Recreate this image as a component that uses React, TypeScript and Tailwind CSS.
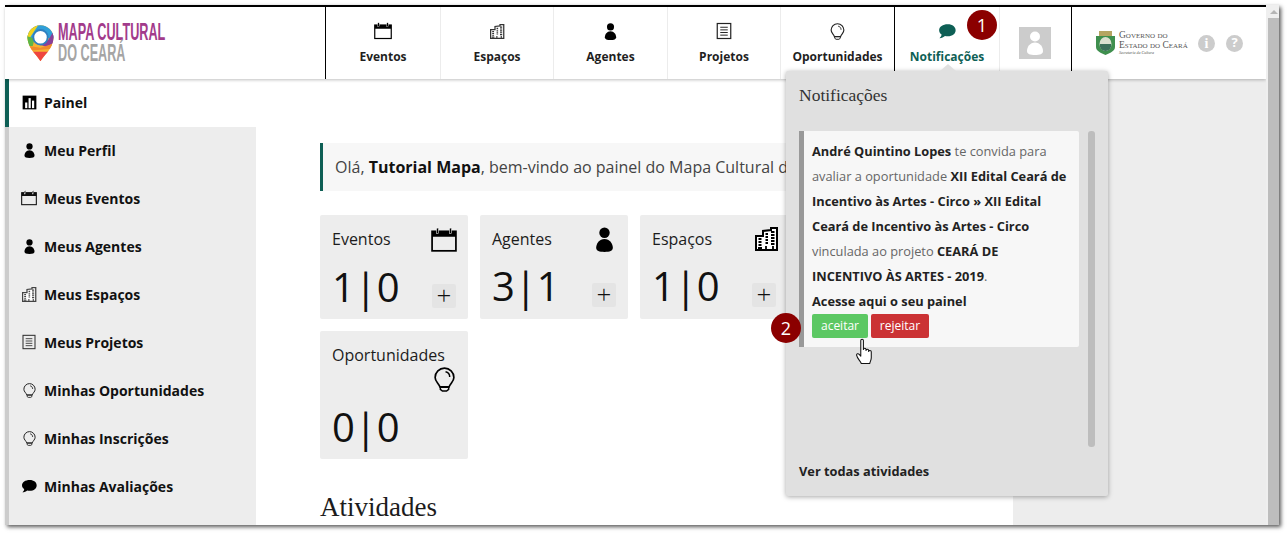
import React from "react";

const Cal = ({ s, c = "#000" }: { s: number; c?: string }) => (
  <svg width={s} height={s} viewBox="0 0 24 24">
    <rect x="1" y="4" width="22" height="18" fill="none" stroke={c} strokeWidth="1.6" />
    <rect x="1" y="4" width="22" height="5" fill={c} />
    <rect x="5" y="1" width="2" height="5" fill={c} stroke="#fff" strokeWidth=".5" />
    <rect x="17" y="1" width="2" height="5" fill={c} stroke="#fff" strokeWidth=".5" />
  </svg>
);
const Person = ({ s, c = "#000" }: { s: number; c?: string }) => (
  <svg width={s} height={s} viewBox="0 0 24 24">
    <circle cx="12" cy="5.5" r="5" fill={c} />
    <path d="M12 11.5c-5 0-8 4.500-8 8.500 0 3 3 4 8 4s8-1 8-4c0-4-3-8.500-8-8.500z" fill={c} />
  </svg>
);
const Building = ({ s, c = "#000" }: { s: number; c?: string }) => (
  <svg width={s} height={s} viewBox="0 0 24 24">
    <path d="M1 23V9h7V4l8-1V1h6v22z" fill="#fff" stroke={c} strokeWidth="2" />
    <path d="M3.500 12h3M3.500 15h3M3.500 18h3M10.500 7h2.500M10.500 10h2.500M10.500 13h2.500M10.500 16h2.500M16 5h3.500M16 8h3.500M16 11h3.500M16 14h3.500M16 17h3.500M3 21h4M11 19v4M18 19v4" stroke={c} strokeWidth="1.800" fill="none" />
  </svg>
);
const Doc = ({ s, c = "#000" }: { s: number; c?: string }) => (
  <svg width={s} height={s} viewBox="0 0 24 24">
    <rect x="3" y="2" width="18" height="20" fill="none" stroke={c} strokeWidth="1.600" />
    <path d="M7 7h10M7 10.500h10M7 14h10M7 17.500h10" stroke={c} strokeWidth="1.300" />
  </svg>
);
const Bulb = ({ s, c = "#000" }: { s: number; c?: string }) => (
  <svg width={s} height={s} viewBox="0 0 24 24">
    <path d="M12 1a9 9 0 0 0-9 9c0 4 3.500 5.500 4.500 9h9c1-3.500 4.500-5 4.500-9A9 9 0 0 0 12 1z" fill="none" stroke={c} strokeWidth="1.600" />
    <path d="M8 19.500h8v2l-2 1.500h-4l-2-1.500zM13 4.500c2.500.5 4 2.500 4 5" fill="none" stroke={c} strokeWidth="1.400" />
  </svg>
);
const Chat = ({ s, c = "#000" }: { s: number; c?: string }) => (
  <svg width={s} height={s} viewBox="0 0 24 24">
    <path d="M13 3C6.500 3 1.500 6.300 1.500 11c0 2.400 1.300 4.400 3.300 5.800C4.600 18.800 3.500 20.500 2 21.500c3 0 5.500-1 7.300-2.700 1.200.2 2.400.3 3.700.3 6.500 0 10.500-3.500 10.500-8S19.500 3 13 3z" fill={c} />
  </svg>
);
const Chart = ({ s }: { s: number }) => (
  <svg width={s} height={s} viewBox="0 0 24 24">
    <rect x="1" y="1" width="22" height="22" fill="#000" />
    <rect x="5" y="12" width="3.500" height="9" fill="#fff" />
    <rect x="10.500" y="5" width="3.500" height="16" fill="#fff" />
    <rect x="16" y="9" width="3.500" height="12" fill="#fff" />
  </svg>
);

const nav = [
  { l: "Eventos", i: <Cal s={18} />, w: "w-[115px]" },
  { l: "Espaços", i: <Building s={15} c="#333" />, w: "w-[113px]" },
  { l: "Agentes", i: <Person s={17} />, w: "w-[114px]" },
  { l: "Projetos", i: <Doc s={18} c="#222" />, w: "w-[113px]" },
  { l: "Oportunidades", i: <Bulb s={17} c="#222" />, w: "w-[114px]" },
];

const side = [
  { l: "Meu Perfil", i: <Person s={15} /> },
  { l: "Meus Eventos", i: <Cal s={16} c="#111" /> },
  { l: "Meus Agentes", i: <Person s={15} /> },
  { l: "Meus Espaços", i: <Building s={15} c="#444" /> },
  { l: "Meus Projetos", i: <Doc s={16} c="#333" /> },
  { l: "Minhas Oportunidades", i: <Bulb s={15} c="#222" /> },
  { l: "Minhas Inscrições", i: <Bulb s={15} c="#222" /> },
  { l: "Minhas Avaliações", i: <Chat s={16} /> },
];

const Card = ({ l, n, i, iconCls, plus = true, tall = false }: { l: string; n: string; i: React.ReactNode; iconCls: string; plus?: boolean; tall?: boolean }) => (
  <div className={`w-[148px] rounded-[2px] bg-[#ededed] px-3 ${tall ? "h-[128px] pt-[11px]" : "h-[104px] pt-[11px]"}`}>
    <div className="flex flex-wrap items-start justify-between">
      <span className="text-[16px] leading-[26px] text-[#1c1c1c]">{l}</span>
      <span className={iconCls}>{i}</span>
    </div>
    <div className={`flex items-end justify-between ${tall ? "mt-[8px]" : "mt-[7px]"}`}>
      <span className="text-[40px] leading-[54px] text-[#111]">{n}</span>
      {plus && (
        <span className="mb-[6px] flex h-6 w-6 items-center justify-center rounded-[2px] bg-[#e4e4e4] pb-[3px] text-[26px] font-light leading-none text-[#111]">+</span>
      )}
    </div>
  </div>
);

const Badge = ({ n, cls }: { n: string; cls: string }) => (
  <div className={`absolute z-30 flex h-[30px] w-[30px] items-center justify-center rounded-full bg-[#8b0000] text-[18px] text-white ${cls}`}>{n}</div>
);

export default function App() {
  return (
    <div className="relative h-[534px] w-[1288px] overflow-hidden bg-white font-['Open_Sans',sans-serif]">
      <div className="relative ml-[5px] mt-[5px] flex h-[520px] w-[1274px] shadow-[2px_2px_4px_rgba(0,0,0,0.65)]">
        <div className="flex h-full w-[1261px] flex-col overflow-hidden border-t-2 border-black bg-white">
          {/* header */}
          <header className="relative z-10 flex h-[72px] shrink-0 bg-white shadow-[0_1px_3px_rgba(0,0,0,0.25)]">
            <div className="flex w-[321px] items-center overflow-hidden border-r border-black pl-[22px]">
              <svg width="27" height="38" viewBox="0 0 28 38" className="-mt-[1px] shrink-0">
                <defs>
                  <clipPath id="pin"><path d="M14 38C11 32 1 25 0.500 14a13.500 13.500 0 0 1 27 0C27 25 17 32 14 38z" /></clipPath>
                </defs>
                <g clipPath="url(#pin)">
                  <rect width="28" height="38" fill="#f6b232" />
                  <rect x="0" y="0" width="28" height="14" fill="#2f9fd8" />
                  <path d="M0 0h12L4 12 0 20z" fill="#f2d31e" />
                  <path d="M0 12 8 14l-2 8H0z" fill="#5db647" />
                  <path d="M28 6v13l-8 4-6-2 8-5z" fill="#8a3f98" />
                  <path d="M2 22l12 2 12-4v5L2 27z" fill="#f08a2c" />
                  <path d="M0 28h28v10H0z" fill="#ee4540" />
                </g>
                <circle cx="14" cy="13" r="7.500" fill="#fff" stroke="#2f7fc0" strokeWidth="2" />
              </svg>
              <div className="ml-[4px] -mt-[1px] origin-left scale-x-[0.55] whitespace-nowrap font-['Liberation_Sans',sans-serif] text-[23px] font-bold leading-[21px]">
                <div className="text-[#a23b8b]">MAPA CULTURAL</div>
                <div className="text-[#a5a5a5]">DO CEARÁ</div>
              </div>
            </div>
            {nav.map((n, i) => (
              <div key={n.l} className={`flex h-full flex-col items-center pt-[14px] ${n.w} ${i === 4 ? "border-r border-black" : "border-r border-[#ececec]"}`}>
                <div className="flex h-[20px] items-center">{n.i}</div>
                <span className="mt-[6px] text-[12px] font-bold leading-[20px] text-[#1f1f1f]">{n.l}</span>
              </div>
            ))}
            <div className="-mt-[2px] flex h-[74px] w-[105px] flex-col items-center border-r border-t-2 border-r-[#ececec] border-t-[#0e5f55] pt-[14px]">
              <div className="flex h-[20px] items-center"><Chat s={18} c="#0e5f55" /></div>
              <span className="mt-[6px] text-[12px] font-bold leading-[20px] text-[#0e5f55]">Notificações</span>
            </div>
            <div className="flex w-[72px] items-center justify-center border-r border-black">
              <div className="-ml-[2px] flex h-8 w-8 items-center justify-center bg-[#cccccc]"><Person s={24} c="#fff" /></div>
            </div>
            <div className="flex flex-1 items-center pl-[23px]">
              <svg width="21" height="24" viewBox="0 0 21 24" className="-mt-[1px] shrink-0">
                <rect x="4" y="0" width="13" height="5" fill="#b5a562" />
                <path d="M1 5h19v11c0 4-5 6-9.500 8C6 22 1 20 1 16z" fill="#3f8f4e" />
                <ellipse cx="10.500" cy="13" rx="6" ry="7" fill="#d9e0d0" />
                <path d="M5 13h11v3c-1 3-4 4-5.500 4S6 19 5 16z" fill="#3a6f5a" />
              </svg>
              <div className="ml-[3px] -mt-[1px] w-[67px] shrink-0 whitespace-nowrap font-['Liberation_Serif',serif] text-[#555] [font-variant:small-caps]">
                <div className="text-[9.5px] leading-[10px]">Governo do</div>
                <div className="text-[9.5px] leading-[10px]">Estado do Ceará</div>
                <div className="text-[4px] italic leading-[5px] [font-variant:normal]">Secretaria da Cultura</div>
              </div>
              <span className="ml-[12px] flex h-[17px] w-[17px] shrink-0 items-center justify-center rounded-full bg-[#cccccc] font-['Liberation_Serif',serif] text-[14px] font-bold text-white">i</span>
              <span className="ml-[11px] flex h-[17px] w-[17px] shrink-0 items-center justify-center rounded-full bg-[#cccccc] text-[13px] font-bold text-white">?</span>
            </div>
          </header>
          {/* body */}
          <div className="flex min-h-0 flex-1">
            <aside className="w-[251px] shrink-0 border-l-4 border-[#cccccc] bg-[#ededed]">
              <div className="relative -ml-1 flex h-12 items-center gap-[7px] border-l-4 border-[#0e5f55] bg-white pb-[2px] pl-3 text-[14px] font-bold text-[#111]">
                <span className="flex w-4 justify-center"><Chart s={15} /></span>Painel
              </div>
              {side.map((s) => (
                <div key={s.l} className="flex h-12 items-center gap-[7px] pb-[2px] pl-3 text-[14px] font-bold text-[#111]">
                  <span className="flex w-4 justify-center">{s.i}</span>
                  {s.l}
                </div>
              ))}
            </aside>
            <main className="w-[757px] shrink-0 overflow-hidden bg-white pl-16 pt-16">
              <div className="flex h-12 w-[640px] items-center border-l-[3px] border-[#0e5f55] bg-[#f7f7f7] pl-3 text-[16px] text-[#444]">
                <span className="whitespace-nowrap">Olá, <b className="text-[#111]">Tutorial Mapa</b>, bem-vindo ao painel do Mapa Cultural do Ceará</span>
              </div>
              <div className="mt-6 flex gap-3">
                <Card l="Eventos" n="1|0" i={<Cal s={26} />} iconCls="mt-[1px] -mr-[1px]" />
                <Card l="Agentes" n="3|1" i={<Person s={25} />} iconCls="mt-[1px] -mr-[1px]" />
                <Card l="Espaços" n="1|0" i={<Building s={24} />} iconCls="mt-[1px] -mr-[3px]" />
              </div>
              <div className="mt-3">
                <Card l="Oportunidades" n="0|0" i={<Bulb s={25} />} iconCls="ml-auto -mt-[1px] -mr-[1px] h-[25px]" plus={false} tall />
              </div>
              <h2 className="mt-[30px] font-['Liberation_Serif',serif] text-[27px] leading-[36px] text-[#1c1c1c]">Atividades</h2>
            </main>
            <div className="flex-1 bg-[#ededed]" />
          </div>
        </div>
        {/* scrollbar */}
        <div className="flex w-[13px] flex-col bg-[#efefef] pl-[2px]">
          <div className="flex h-[13px] items-center justify-center">
            <div className="h-0 w-0 border-x-[4px] border-b-[4px] border-x-transparent border-b-[#b5b5b5]" />
          </div>
          <div className="flex-1 bg-[#bdbdbd]" />
        </div>
      </div>

      {/* notifications dropdown */}
      <div className="absolute left-[786px] top-[71px] z-20 flex h-[425px] w-[322px] flex-col rounded-[2px] bg-[#e0e0e0] pl-[13px] shadow-[0_1px_5px_rgba(0,0,0,0.35)]">
        <div className="absolute -top-[7px] left-[154px] h-0 w-0 border-x-[8px] border-b-[7px] border-x-transparent border-b-[#e0e0e0]" />
        <div className="pt-[12px] font-['Liberation_Serif',serif] text-[17.5px] leading-[24px] text-[#333]">Notificações</div>
        <div className="mt-[24px] flex h-[316px]">
          <div className="h-[216px] w-[280px] rounded-r-[2px] border-l-[5px] border-[#999999] bg-[#f7f7f7] pl-2 pt-[8px] text-[12.8px] leading-[25px] text-[#666]">
            <b className="text-[#222]">André Quintino Lopes</b> te convida para<br />
            avaliar a oportunidade <b className="text-[#222]">XII Edital Ceará de</b><br />
            <b className="text-[#222]">Incentivo às Artes - Circo » XII Edital</b><br />
            <b className="text-[#222]">Ceará de Incentivo às Artes - Circo</b><br />
            vinculada ao projeto <b className="text-[#222]">CEARÁ DE</b><br />
            <b className="text-[#222]">INCENTIVO ÀS ARTES - 2019</b>.<br />
            <b className="text-[#222]">Acesse aqui o seu painel</b>
            <div className="flex gap-[3px] text-[12px] text-white">
              <span className="flex h-6 w-14 items-center justify-center rounded-[2px] bg-[#5cc863] leading-none">aceitar</span>
              <span className="flex h-6 w-[58px] items-center justify-center rounded-[2px] bg-[#cb3234] leading-none">rejeitar</span>
            </div>
          </div>
          <div className="ml-[9px] w-[7px] rounded-[3px] bg-[#bdbdbd]" />
        </div>
        <div className="mt-[15px] text-[12.8px] font-bold leading-[18px] text-[#222]">Ver todas atividades</div>
      </div>

      <Badge n="1" cls="left-[967px] top-[10px]" />
      <Badge n="2" cls="left-[771px] top-[313px]" />
      <svg className="absolute left-[855px] top-[338px] z-30" width="21" height="28" viewBox="0 0 20 26">
        <path d="M4.500 2c0-1.500 2.500-1.500 2.500 0v8.500c0-1.500 2.500-1.500 2.500 0v1c0-1.500 2.500-1.500 2.500 0v1c0-1.300 2.500-1.300 2.500 .3v5.700c0 2-1 3.500-1.500 5.500H5c-.5-2-4-5-4.500-8-.2-1.300 1.500-1.800 2.500-.8l1.500 1.800z" fill="#fff" stroke="#111" strokeWidth="1" strokeLinejoin="round" transform="translate(1 0)" />
      </svg>
    </div>
  );
}
